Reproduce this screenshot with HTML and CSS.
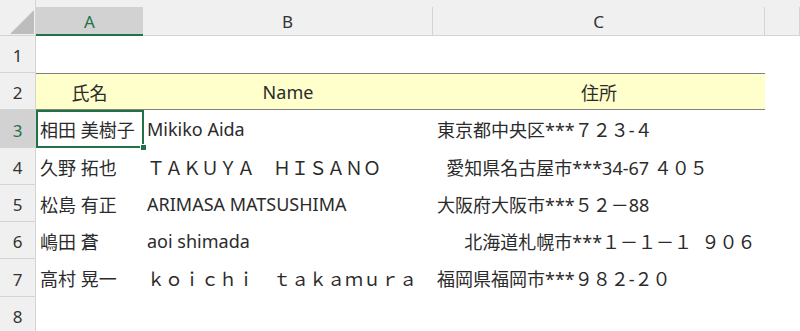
FILE: index.html
```html
<!DOCTYPE html>
<html lang="ja">
<head>
  <meta charset="UTF-8" />
  <title>名簿 - Excel</title>
  <link rel="stylesheet" href="styles.css">
</head>
<body>

<div class="sheet">
  <!-- column headers -->
  <div class="row heads">
    <div class="corner">
      <svg width="36" height="36" viewBox="0 0 36 36"><polygon points="34,10 34,34 10,34" fill="#bdbdbd"/></svg>
    </div>
    <div class="ch active">A</div>
    <div class="ch">B</div>
    <div class="ch">C</div>
    <div class="ch"></div>
  </div>

  <div class="row">
    <div class="rh">1</div>
    <div class="c"></div><div class="c"></div><div class="c"></div><div class="c"></div>
  </div>

  <div class="row">
    <div class="rh">2</div>
    <div class="c title center">氏名</div>
    <div class="c title center">Name</div>
    <div class="c title center">住所</div>
    <div class="c"></div>
  </div>

  <div class="row tall">
    <div class="rh active">3</div>
    <div class="c selected">相田 美樹子<span class="handle"></span></div>
    <div class="c">Mikiko Aida</div>
    <div class="c">東京都中央区***７２３-４</div>
    <div class="c"></div>
  </div>

  <div class="row">
    <div class="rh">4</div>
    <div class="c">久野 拓也</div>
    <div class="c">ＴＡＫＵＹＡ　ＨＩＳＡＮＯ</div>
    <div class="c">  愛知県名古屋市***34-67 ４０５</div>
    <div class="c"></div>
  </div>

  <div class="row">
    <div class="rh">5</div>
    <div class="c">松島 有正</div>
    <div class="c">ARIMASA MATSUSHIMA</div>
    <div class="c">大阪府大阪市***５２－88</div>
    <div class="c"></div>
  </div>

  <div class="row">
    <div class="rh">6</div>
    <div class="c">嶋田 蒼</div>
    <div class="c">aoi shimada</div>
    <div class="c">　  北海道札幌市***１－１－１  ９０６</div>
    <div class="c"></div>
  </div>

  <div class="row tall">
    <div class="rh">7</div>
    <div class="c">高村 晃一</div>
    <div class="c">ｋｏｉｃｈｉ　ｔａｋａｍｕｒａ</div>
    <div class="c">福岡県福岡市***９８２-２０</div>
    <div class="c"></div>
  </div>

  <div class="row">
    <div class="rh">8</div>
    <div class="c"></div><div class="c"></div><div class="c"></div><div class="c"></div>
  </div>
</div>

</body>
</html>
```

FILE: styles.css
```css
:root {
  --head:#f0f0f0; --head-sel:#d2d2d2; --line:#d4d4d4; --green:#217346;
  --fill:#ffffcc; --rule:#808080; --text:#2b2b2b;
}
body{margin:0;background:#fff;color:var(--text);overflow:hidden;
     font-family:"Noto Sans","Noto Sans CJK JP",sans-serif}
.sheet{width:800px}
.row{display:grid;grid-template-columns:36px 107px 290px 332px 35px;height:37px}
.row.tall{height:38px}

/* column header strip */
.heads{height:36px;background:var(--head)}
.corner{border-right:1px solid var(--line);border-bottom:1px solid var(--line);height:36px;box-sizing:border-box}
.corner svg{display:block}
.ch{margin-top:7px;border-right:1px solid var(--line);border-bottom:1px solid var(--line);
    display:flex;align-items:center;justify-content:center;padding-top:1px;
    font:17px "Noto Sans",sans-serif;color:#333}
.ch.active{background:var(--head-sel);color:var(--green);border-bottom:2px solid var(--green);border-right:none}

/* row numbers */
.rh{background:var(--head);border-right:1px solid var(--line);border-bottom:1px solid var(--line);
    display:flex;align-items:center;justify-content:center;padding-top:3px;
    font:17px "Noto Sans",sans-serif;color:#333}
.rh.active{background:var(--head-sel);color:var(--green)}

/* cells */
.c{display:flex;align-items:center;padding-left:4px;font-size:18px;white-space:pre;min-width:0}
.c.center{justify-content:center;padding-left:0}
.c.title{background:var(--fill);border-top:1px solid var(--rule);border-bottom:1px solid var(--rule)}

.selected{position:relative}
.selected::after{content:"";position:absolute;left:0;top:0;right:-1px;bottom:0;border:2px solid var(--green)}
.handle{position:absolute;right:-4px;bottom:-3px;width:5px;height:5px;background:var(--green);
        border:1px solid #fff;z-index:1}
```
